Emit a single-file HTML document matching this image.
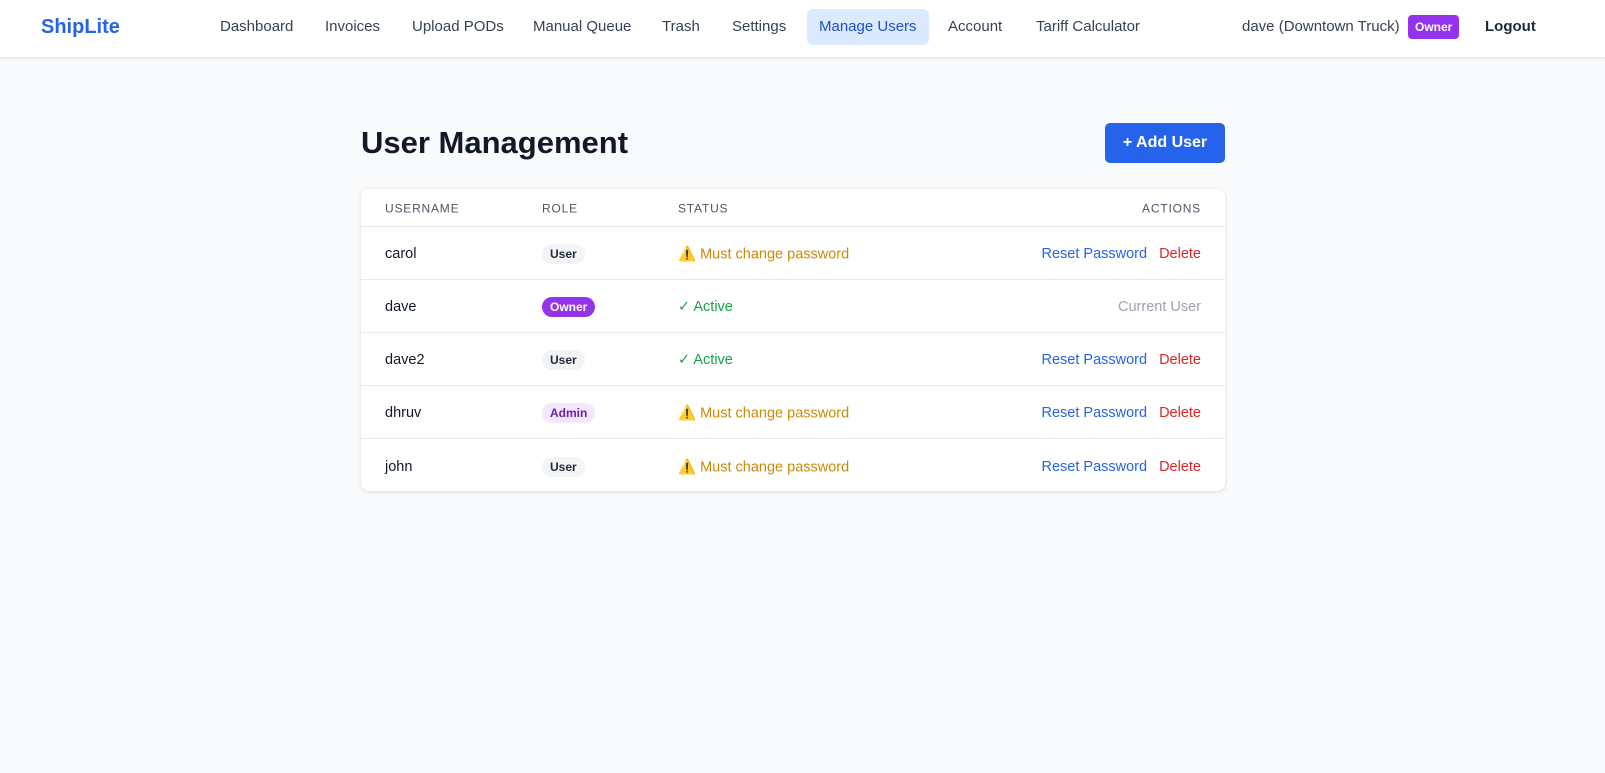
<!DOCTYPE html>
<html><head><meta charset="utf-8"><style>
*{box-sizing:border-box;margin:0;padding:0}
body{width:1605px;height:773px;background:#f9fafb;font-family:"Liberation Sans",Arial,sans-serif;color:#111827;position:relative;overflow:hidden}
.nav{position:absolute;left:0;top:0;width:1605px;height:58px;background:#fff;border-bottom:1px solid #e5e7eb;box-shadow:0 1px 3px rgba(0,0,0,.08)}
.nav span{position:absolute;top:17px;font-size:15px;color:#374151;white-space:nowrap;line-height:20px}
.logo{left:41px;font-weight:bold;font-size:20px!important;color:#2563eb!important;top:16px!important;line-height:22px!important}
.active{background:#dbeafe;color:#1d4ed8!important;border-radius:6px;top:9px!important;height:36px;padding:8px 12px;left:807px}
.ob{background:#9333ea;color:#fff!important;font-size:12px!important;font-weight:bold;border-radius:4px;padding:3px 7px;top:15px!important;line-height:18px!important}
h1{position:absolute;left:361px;top:125px;font-size:31px;font-weight:bold;color:#111827}
.btn{position:absolute;left:1105px;top:123px;width:120px;height:40px;background:#2563eb;color:#fff;border-radius:5px;font-weight:bold;font-size:16px;text-align:center;line-height:40px}
.tbl{position:absolute;left:361px;top:189px;width:864px;height:302px;background:#fff;border-radius:8px;box-shadow:0 1px 4px rgba(0,0,0,.12)}
.hd{height:38px;border-bottom:1px solid #e5e7eb;position:relative;font-size:12px;letter-spacing:.8px;color:#4b5563}
.row{height:53px;border-bottom:1px solid #e5e7eb;position:relative;font-size:14.5px}
.row:last-child{border-bottom:none}
.c{position:absolute;top:50%;transform:translateY(-45%);white-space:nowrap}
.c1{left:24px}.c2{left:181px}.c3{left:317px}.c4{right:24px}
.b{font-size:12px;font-weight:bold;padding:3px 8px;border-radius:10px;background:#f3f4f6;color:#1f2937}
.bo{background:#9333ea;color:#fff}.ba{background:#f3e8ff;color:#6b21a8}
.w{color:#ca8a04}.g{color:#16a34a}
.rp{color:#2563eb}.del{color:#dc2626;margin-left:12px}.cu{color:#9ca3af}
</style></head><body>
<div class="nav">
<span class="logo">ShipLite</span>
<span style="left:220px">Dashboard</span>
<span style="left:325px">Invoices</span>
<span style="left:412px">Upload PODs</span>
<span style="left:533px">Manual Queue</span>
<span style="left:662px">Trash</span>
<span style="left:732px">Settings</span>
<span class="active">Manage Users</span>
<span style="left:948px">Account</span>
<span style="left:1036px">Tariff Calculator</span>
<span style="left:1242px">dave (Downtown Truck)</span>
<span class="ob" style="left:1408px">Owner</span>
<span style="left:1485px;font-weight:bold;color:#1f2937">Logout</span>
</div>
<h1>User Management</h1>
<div class="btn">+ Add User</div>
<div class="tbl">
<div class="hd"><span class="c c1">USERNAME</span><span class="c c2">ROLE</span><span class="c c3">STATUS</span><span class="c c4">ACTIONS</span></div>
<div class="row"><span class="c c1">carol</span><span class="c c2 b">User</span><span class="c c3 w">⚠️ Must change password</span><span class="c c4"><span class="rp">Reset Password</span><span class="del">Delete</span></span></div>
<div class="row"><span class="c c1">dave</span><span class="c c2 b bo">Owner</span><span class="c c3 g">✓ Active</span><span class="c c4 cu">Current User</span></div>
<div class="row"><span class="c c1">dave2</span><span class="c c2 b">User</span><span class="c c3 g">✓ Active</span><span class="c c4"><span class="rp">Reset Password</span><span class="del">Delete</span></span></div>
<div class="row"><span class="c c1">dhruv</span><span class="c c2 b ba">Admin</span><span class="c c3 w">⚠️ Must change password</span><span class="c c4"><span class="rp">Reset Password</span><span class="del">Delete</span></span></div>
<div class="row"><span class="c c1">john</span><span class="c c2 b">User</span><span class="c c3 w">⚠️ Must change password</span><span class="c c4"><span class="rp">Reset Password</span><span class="del">Delete</span></span></div>
</div>
</body></html>
